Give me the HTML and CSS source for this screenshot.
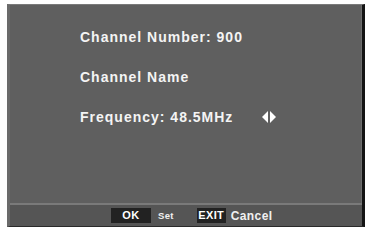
FILE: index.html
```html
<!DOCTYPE html>
<html>
<head>
<meta charset="utf-8">
<link rel="stylesheet" href="styles.css">
</head>
<body>
<div class="panel">
  <div class="content">
    <div class="row">Channel Number: 900</div>
    <div class="row">Channel Name</div>
    <div class="row">Frequency: 48.5MHz
      <svg class="arrows" width="14" height="12" viewBox="0 0 14 12">
        <polygon points="6,0 6,12 0,6" fill="#ffffff"/>
        <polygon points="8,0 8,12 14,6" fill="#ffffff"/>
      </svg>
    </div>
  </div>
  <div class="footer">
    <span class="key key-ok">OK</span>
    <span class="label-set">Set</span>
    <span class="key key-exit">EXIT</span>
    <span class="label-cancel">Cancel</span>
  </div>
</div>
</body>
</html>
```
FILE: styles.css
```css
html, body {
  margin: 0;
  padding: 0;
  background: #ffffff;
}
body {
  width: 368px;
  height: 228px;
  overflow: hidden;
  font-family: "Liberation Sans", Arial, sans-serif;
}
.panel {
  margin: 4px 0 0 7px;
  width: 352px;
  height: 221px;
  background: #5f5f5f;
  border-top: 1px solid #7a7a7a;
  border-left: 3px solid #6a6a6a;
  border-right: 3px solid #141414;
  border-bottom: 1px solid #2a2a2a;
  display: flex;
  flex-direction: column;
}
.content {
  flex: 1;
  padding: 24px 0 0 70px;
  display: flex;
  flex-direction: column;
  gap: 24px;
  border-right: 1px solid #6e6e6e;
}
.row {
  color: #f4f4f4;
  font-weight: bold;
  font-size: 14px;
  line-height: 16px;
  letter-spacing: 1px;
  display: flex;
  align-items: center;
}
.arrows {
  margin-left: 29px;
  display: block;
}
.footer {
  height: 21px;
  border-top: 2px solid #7a7a7a;
  background: #555555;
  display: flex;
  align-items: center;
  padding-left: 101px;
  color: #f0f0f0;
  font-weight: bold;
}
.key {
  background: #222222;
  height: 15px;
  line-height: 15px;
  font-size: 11px;
  text-align: center;
  color: #ffffff;
}
.key-ok {
  width: 40px;
  letter-spacing: 0.5px;
}
.key-exit {
  width: 29px;
  margin-left: 23px;
  letter-spacing: 0.3px;
}
.label-set {
  margin-left: 7px;
  font-size: 9.5px;
  letter-spacing: 0.3px;
}
.label-cancel {
  margin-left: 5px;
  font-size: 12px;
  letter-spacing: 0.4px;
}
```
